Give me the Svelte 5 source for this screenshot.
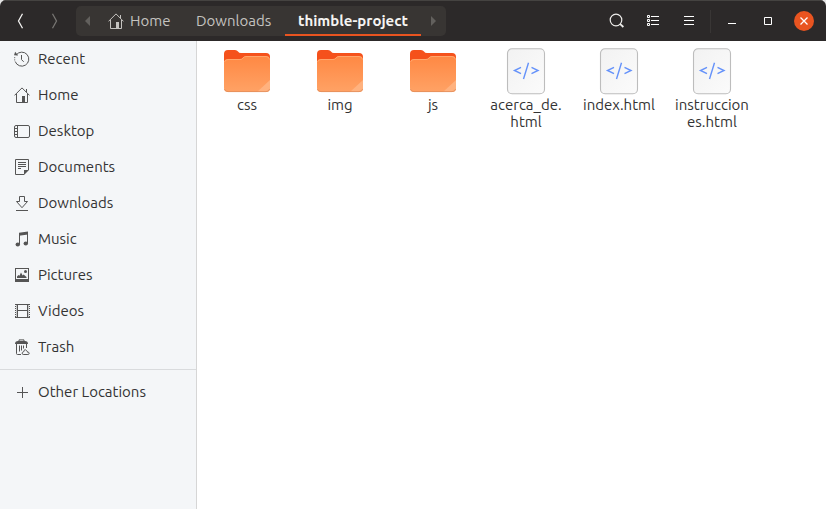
<script>
  const places = ['Recent', 'Home', 'Desktop', 'Documents', 'Downloads', 'Music', 'Pictures', 'Videos', 'Trash'];
  const files = [
    { kind: 'folder', lines: ['css'] },
    { kind: 'folder', lines: ['img'] },
    { kind: 'folder', lines: ['js'] },
    { kind: 'html', lines: ['acerca_de.', 'html'] },
    { kind: 'html', lines: ['index.html'] },
    { kind: 'html', lines: ['instruccion', 'es.html'] }
  ];
</script>

{#snippet icon(name)}
  <svg class="icon" width="16" height="16" viewBox="0 0 16 16" fill="none" stroke="currentColor">
    {#if name === 'Recent'}
      <path d="M2.3 3.8A7 7 0 1 1 1.2 10.5" />
      <path d="M0 4.2 1.2.8 4.2 4.4Z" fill="currentColor" stroke="none" />
      <path d="M7.5 4v4.6l2.2 2.2" />
      <path d="M.7 6.2v1M.7 8.4v1" />
    {:else if name === 'Home'}
      <path d="M.5 8.4 8 .9l7.5 7.5M2.5 7v8.5h11V7M12.5 2v3" />
      <path d="M8 9h3v6H8z" fill="currentColor" stroke="none" />
    {:else if name === 'Desktop'}
      <rect x=".5" y="2.5" width="15" height="12" rx="1.5" />
      <path d="M3.5 2.5v12M1 5.5h2M1 8.5h2M1 11.5h2" />
    {:else if name === 'Documents'}
      <path d="M14.5 11V.5h-13v15H10" />
      <path d="M4 3.5h8M4 5.5h8M4 7.5h8M4 9.5h3" />
      <path d="M10 16v-5h5z" fill="currentColor" stroke="none" />
    {:else if name === 'Downloads'}
      <path d="M5.5 1.5h5v5h3L8 12.7 2.5 6.5h3zM2 15.5h12" />
    {:else if name === 'Music'}
      <path d="M5.5 13V2.5M13.5 12V1.5" />
      <path d="M5 1.7 14 .5v3L5 4.7z" fill="currentColor" stroke="none" />
      <ellipse cx="3.8" cy="13.5" rx="2.2" ry="1.9" fill="currentColor" stroke="none" />
      <ellipse cx="11.8" cy="12.5" rx="2.2" ry="1.9" fill="currentColor" stroke="none" />
    {:else if name === 'Pictures'}
      <path d="M1 1h14v14H1zM2 2v10h12V2z" fill="currentColor" stroke="none" fill-rule="evenodd" />
      <path d="M3 11V9.5l1.5-1.5 1 .8L7 5.5l1.6 3 1-1L12.5 10v1z" fill="currentColor" stroke="none" />
      <circle cx="11.5" cy="4.5" r="1.5" fill="currentColor" stroke="none" />
    {:else if name === 'Videos'}
      <path d="M1 1.5h15M1 14.5h15M3.5 2v12M13.5 2v12M3.5 7.5h10" />
      <path d="M1.5 1v14M15.5 1v14" stroke-dasharray="1 1" />
      <path d="M2.5 1v14M14.5 1v14" stroke-opacity=".3" />
    {:else if name === 'Trash'}
      <path d="M5 2.5V.9h5v1.6" />
      <path d="M1 5q0-3 3-3h7q3 0 3 3z" fill="currentColor" stroke="none" />
      <path d="M2.5 5v9.5q0 1 1 1H7M12.5 5v4M5.5 6.5v6M7.5 6.5v5M9.5 6.5v3" />
      <path d="M9.2 15.5q-1.7-.4-.9-2 .7-.8 1.6-.9-.3-1.4 1.4-2.1.3 1 1.5 1.3.9.7.4 1.2 2 0 2 1.3-.1 1.2-1.3 1.2z" />
    {:else}
      <path d="M8.5 3v11M3 8.5h11" />
    {/if}
  </svg>
{/snippet}

<div class="window">
  <header>
    <button class="nav" aria-label="Back">
      <svg width="8" height="16" viewBox="0 0 8 16"><path d="M5.5.7 1.5 8l4 7.3" fill="none" stroke="#f2f1ef" stroke-width="1.3" /></svg>
    </button>
    <button class="nav forward" aria-label="Forward">
      <svg width="8" height="16" viewBox="0 0 8 16"><path d="m1.5.7 4 7.3-4 7.3" fill="none" stroke="#777572" stroke-width="1.3" /></svg>
    </button>
    <nav class="path">
      <span class="arrow"><svg width="5" height="10" viewBox="0 0 5 10"><path d="M5 0v10L0 5z" fill="#62605d" /></svg></span>
      <span class="crumb home">{@render icon('Home')}<span>Home</span></span>
      <span class="crumb downloads">Downloads</span>
      <span class="crumb current">thimble-project</span>
      <span class="arrow end"><svg width="5" height="10" viewBox="0 0 5 10"><path d="M0 0v10l5-5z" fill="#62605d" /></svg></span>
    </nav>
    <div class="tools">
      <button class="tool" aria-label="Search">
        <svg width="16" height="16" viewBox="0 0 16 16" fill="none" stroke="#eeedeb"><circle cx="7" cy="7" r="5.8" stroke-width="1.2" /><path d="m11 10.9 3.4 3.1" stroke-width="1.8" /></svg>
      </button>
      <button class="tool" aria-label="View as list">
        <svg width="16" height="16" viewBox="0 0 16 16" fill="none" stroke="#fff"><path d="M2.5 2.5h2v2h-2zM2.5 6.5h2v2h-2zM2.5 10.5h2v2h-2zM6 3.5h8M6 7.5h8M6 11.5h8" /></svg>
      </button>
      <button class="tool" aria-label="Menu">
        <svg width="16" height="16" viewBox="0 0 16 16" fill="none" stroke="#fff"><path d="M3 3.5h10M3 7.5h10M3 11.5h10" /></svg>
      </button>
      <i class="divider"></i>
      <button class="tool wm" aria-label="Minimize">
        <svg width="16" height="16" viewBox="0 0 16 16"><path d="M4 10.5h8" stroke="#fff" /></svg>
      </button>
      <button class="tool wm" aria-label="Maximize">
        <svg width="16" height="16" viewBox="0 0 16 16"><path d="M4.5 4.5h7v7h-7z" fill="none" stroke="#fff" /></svg>
      </button>
      <button class="tool wm" aria-label="Close">
        <svg width="20" height="20" viewBox="0 0 20 20"><circle cx="10" cy="10" r="10" fill="#e95420" /><path d="m6.5 6.5 7 7m0-7-7 7" stroke="#fff" stroke-width="1.3" /></svg>
      </button>
    </div>
  </header>
  <div class="body">
    <aside>
      {#each places as place}
        <div class="row">{@render icon(place)}<span>{place}</span></div>
      {/each}
      <hr />
      <div class="row">{@render icon('Other')}<span>Other Locations</span></div>
    </aside>
    <main>
      {#each files as file}
        <div class="file">
          {#if file.kind === 'folder'}
            <svg width="48" height="48" viewBox="0 0 48 48">
              <defs>
                <linearGradient id="front" x2="0" y2="1"><stop stop-color="#ff8843" /><stop offset="1" stop-color="#ffa265" /></linearGradient>
              </defs>
              <path d="M1 6q0-4 4-4h7q2 0 3 1.5T18 5h25q4 0 4 4v9H1z" fill="#f5511b" />
              <path d="M1 15q0-4 4-4h12q2 0 3-1.5T23 8h20q4 0 4 4v28q0 4-4 4H5q-4 0-4-4z" fill="url(#front)" />
              <path d="M1.5 14q.5-2.5 3.5-2.5h12q2 0 3-1.5t3-1.5h20q3 0 3.5 3" fill="none" stroke="#ffb17d" stroke-width=".7" />
              <path d="M34 44 47 32v8q0 4-4 4z" fill="#ffb27f" />
              <path d="M1.4 41q.6 2.6 3.6 2.6h38q3 0 3.6-2.6" fill="none" stroke="#df8b59" stroke-width=".8" />
            </svg>
          {:else}
            <svg width="48" height="48" viewBox="0 0 48 48">
              <defs>
                <linearGradient id="paper" x2="1" y2="1"><stop stop-color="#f2f2f2" /><stop offset="1" stop-color="#fbfbfb" /></linearGradient>
              </defs>
              <rect x="5.5" y=".7" width="37" height="45" rx="4.5" fill="url(#paper)" stroke="#bdbdbd" stroke-width="1.1" />
              <path d="M19 19.4 12.5 22.5 19 25.6M29.5 19.4 36 22.5 29.5 25.6M26.5 14.8 21.5 31" fill="none" stroke="#6592fa" stroke-width="1.4" />
            </svg>
          {/if}
          <div class="label">{#each file.lines as line}<span>{line}</span>{/each}</div>
        </div>
      {/each}
    </main>
  </div>
</div>

<style>
  :global(body) { margin: 0; background: #e4e4e4; }
  .window { width: 826px; height: 509px; overflow: hidden; display: flex; flex-direction: column; box-sizing: border-box; border-radius: 6px 6px 0 0; background: #fff; color: #333; font: 15px/20px Ubuntu, "Noto Sans", sans-serif; }
  header { height: 41px; flex: none; display: flex; align-items: center; box-sizing: border-box; border-top: 1px solid #454341; background: #2c2929; color: #c5c3c0; }
  button { border: 0; padding: 0; background: none; display: flex; align-items: center; justify-content: center; }
  svg { display: block; flex: none; }
  .nav { width: 34px; height: 34px; margin-left: 4px; }
  .nav.forward { margin-left: 0; }
  .path { width: 370px; height: 30px; margin: 0 0 0 4px; display: flex; align-items: center; background: #383533; border-radius: 5px; }
  .arrow { width: 5px; margin-left: 9px; }
  .arrow.end { margin-left: 10px; }
  .crumb { height: 30px; display: flex; align-items: center; box-sizing: border-box; white-space: nowrap; }
  .home { width: 62px; margin-left: 18px; gap: 6px; }
  .downloads { width: 75px; margin-left: 26px; }
  .current { width: 136px; margin-left: 14px; padding-top: 2px; justify-content: center; border-bottom: 2px solid #e95420; color: #f5f4f2; font-weight: 700; }
  .tools { margin-left: auto; display: flex; align-items: center; padding-right: 4px; }
  .tool { width: 36px; height: 36px; }
  .divider { width: 1px; height: 23px; margin: 0 3px; background: #393635; }
  .body { flex: 1; display: flex; min-height: 0; }
  aside { width: 197px; box-sizing: border-box; border-right: 1px solid #d6d6d6; background: #f4f6f8; }
  .row { height: 36px; display: flex; align-items: center; gap: 8px; padding-left: 14px; }
  .row .icon { color: #555; }
  hr { height: 1px; margin: 4px 0; border: 0; background: #d9dbdd; }
  main { flex: 1; display: flex; align-items: flex-start; padding: 7px 0 0 3.5px; }
  .file { width: 93px; display: flex; flex-direction: column; align-items: center; }
  .label { display: flex; flex-direction: column; align-items: center; line-height: 17px; }
</style>
